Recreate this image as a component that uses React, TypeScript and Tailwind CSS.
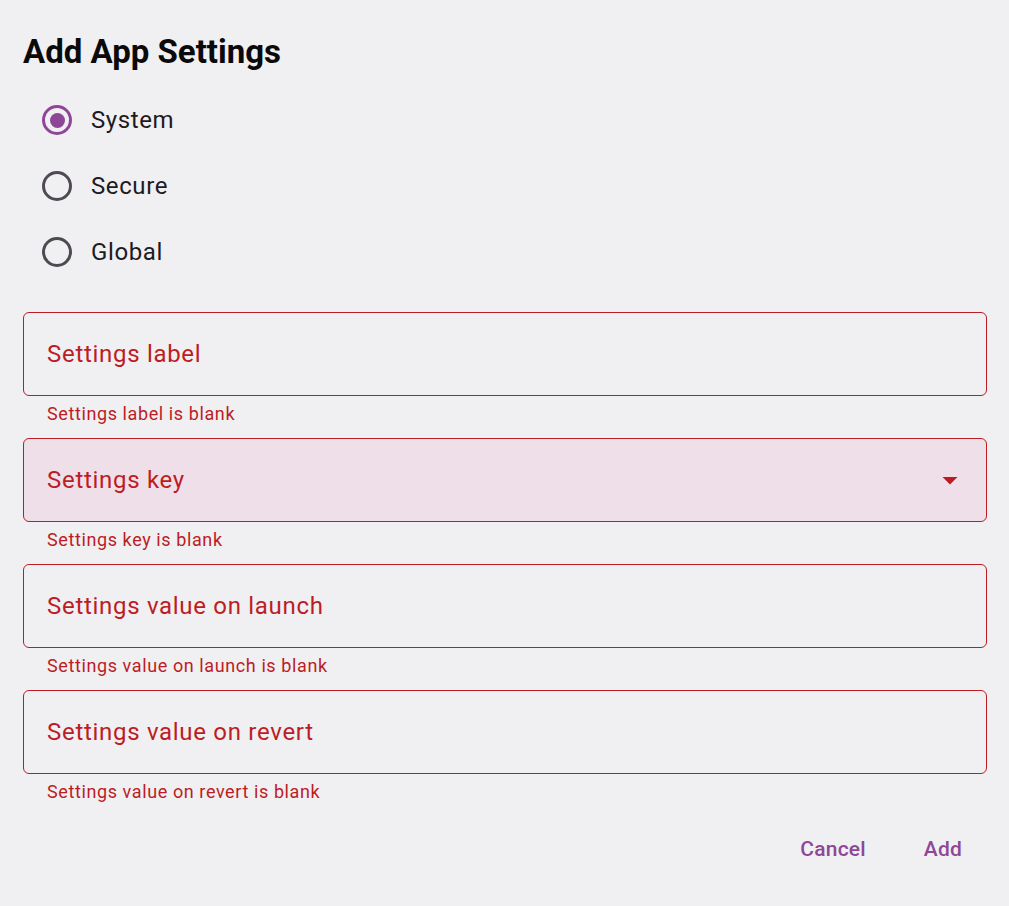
import React from "react";

const ERROR = "#bc1d24";

interface FieldProps {
  label: string;
  error: string;
  dropdown?: boolean;
}

const Field: React.FC<FieldProps> = ({ label, error, dropdown }) => {
  return (
    <div className="flex flex-col">
      <div
        className={`flex items-center justify-between h-[84px] rounded-[6px] border-[1.5px] border-[#bc1d24] pl-[23px] pr-[18px] ${
          dropdown ? "bg-[#efdfe8]" : "bg-transparent"
        }`}
      >
        <span className="text-[24px] leading-[32px] tracking-[0.7px] text-[#bc1d24]">
          {label}
        </span>
        {dropdown && (
          <svg width="36" height="36" viewBox="0 0 24 24" fill={ERROR}>
            <path d="M7 10l5 5 5-5z" />
          </svg>
        )}
      </div>
      <div className="h-[42px] pt-[6px] pl-[24px]">
        <span className="block text-[18px] leading-[24px] tracking-[0.6px] text-[#bc1d24]">
          {error}
        </span>
      </div>
    </div>
  );
};

interface RadioProps {
  label: string;
  checked?: boolean;
}

const Radio: React.FC<RadioProps> = ({ label, checked }) => {
  return (
    <div className="flex items-center h-[66px] pl-[19px]">
      <div
        className={`flex items-center justify-center w-[30px] h-[30px] rounded-full border-[3px] ${
          checked ? "border-[#8e4797]" : "border-[#4f4a52]"
        }`}
      >
        {checked && <div className="w-[15px] h-[15px] rounded-full bg-[#8e4797]" />}
      </div>
      <span className="ml-[19px] text-[24px] leading-[32px] tracking-[0.6px] text-[#1c1b1f]">
        {label}
      </span>
    </div>
  );
};

export default function App() {
  return (
    <div
      className="w-full h-[906px] bg-[#f0eff2] pl-[23px] pr-[22px]"
      style={{ fontFamily: "Roboto, 'Liberation Sans', sans-serif" }}
    >
      <h1 className="pt-[32px] text-[33px] leading-[40px] font-bold text-[#0a0a0a]">
        Add App Settings
      </h1>

      <div className="mt-[15px] flex flex-col">
        <Radio label="System" checked />
        <Radio label="Secure" />
        <Radio label="Global" />
      </div>

      <div className="mt-[27px] flex flex-col">
        <Field label="Settings label" error="Settings label is blank" />
        <Field label="Settings key" error="Settings key is blank" dropdown />
        <Field
          label="Settings value on launch"
          error="Settings value on launch is blank"
        />
        <Field
          label="Settings value on revert"
          error="Settings value on revert is blank"
        />
      </div>

      <div className="mt-[4px] flex justify-end gap-[10px] pr-[1px]">
        <button className="h-[60px] px-[24px] text-[21px] font-medium tracking-[0.2px] text-[#8e4797]">
          Cancel
        </button>
        <button className="h-[60px] px-[24px] text-[21px] font-medium tracking-[0.2px] text-[#8e4797]">
          Add
        </button>
      </div>
    </div>
  );
}
